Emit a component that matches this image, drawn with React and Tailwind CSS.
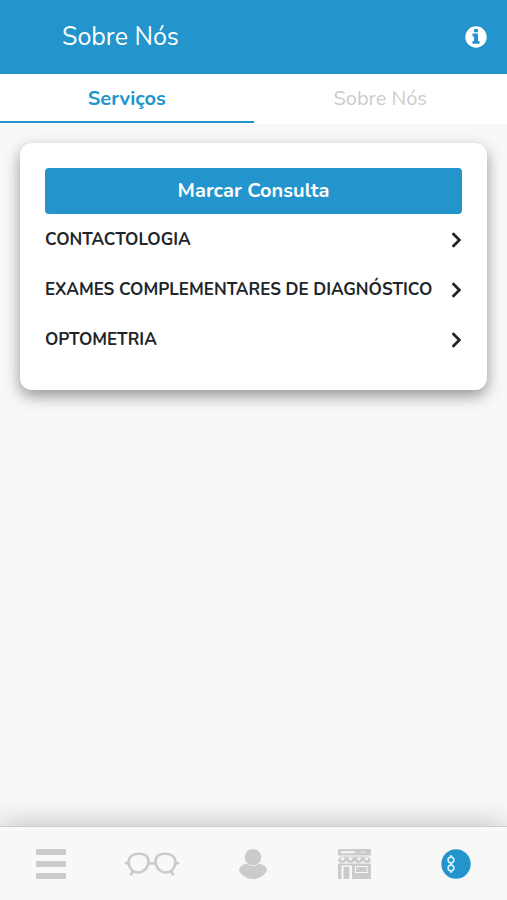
import React, { useState } from "react";
import { FaChevronRight } from "react-icons/fa";

const TABS = ["Serviços", "Sobre Nós"];

const SERVICES = [
  "CONTACTOLOGIA",
  "EXAMES COMPLEMENTARES DE DIAGNÓSTICO",
  "OPTOMETRIA",
];

const InfoIcon = () => (
  <svg width="22" height="22" viewBox="0 0 22 22">
    <circle cx="11" cy="11" r="10.700" fill="#ffffff" />
    <rect x="9" y="3" width="4" height="3.300" rx="0.500" fill="#2394cc" />
    <path
      fill="#2394cc"
      d="M7.500 7.600H13V15H14.500V17.800H7.500V15H9V10.400H7.500Z"
    />
  </svg>
);

const MenuIcon = () => (
  <svg width="30" height="30" viewBox="0 0 30 30" fill="currentColor">
    <rect y="0" width="30" height="6" rx="1" />
    <rect y="12" width="30" height="6" rx="1" />
    <rect y="24" width="30" height="6" rx="1" />
  </svg>
);

const GlassesIcon = () => (
  <svg
    width="56"
    height="24"
    viewBox="0 0 56 24"
    fill="none"
    stroke="currentColor"
    strokeWidth="2.6"
    strokeLinecap="round"
    strokeLinejoin="round"
  >
    <path d="M14 1.800C19 1.300 24.500 3.500 24.500 9C24.500 15 20 20.500 14 20.500C8.500 20.500 5 16 4.700 10C4.500 4.500 9 2.100 14 1.800Z" />
    <path d="M42 1.800C37 1.300 31.500 3.500 31.500 9C31.500 15 36 20.500 42 20.500C47.500 20.500 51 16 51.300 10C51.500 4.500 47 2.100 42 1.800Z" />
    <path d="M24.500 11.500H31.500M9 19.500L7 22.300M47 19.500L49 22.300" />
    <path
      fill="currentColor"
      stroke="none"
      d="M0 11L5 8.500V14ZM56 11L51 8.500V14Z"
    />
  </svg>
);

const PersonIcon = () => (
  <svg width="28" height="30" viewBox="0 0 28 30" fill="currentColor">
    <path d="M5.500 15.300C8 14.500 20 14.500 22.500 15.300C25.500 16.300 27.800 18.500 28 21.500C25 27 20 30 14 30C8 30 3 27 0 21.500C.2 18.500 2.500 16.300 5.500 15.300Z" />
    <circle
      cx="14"
      cy="8.200"
      r="8.600"
      stroke="#f8f8f8"
      strokeWidth="0.800"
    />
  </svg>
);

const StoreIcon = () => (
  <svg width="33" height="30" viewBox="0 0 33 30">
    <g fill="currentColor">
      <rect width="33" height="6.500" rx="0.500" />
      <path d="M2 7.500H31L33 11C32.800 13 31 14 29 14C27 14 26 13 25 12C24 13 22.700 14 20.700 14C18.700 14 17.500 13 16.500 12C15.500 13 14.300 14 12.300 14C10.300 14 9 13 8 12C7 13 6 14 4 14C2 14 .2 13 0 11Z" />
      <path d="M0 14.500H33V30H14V16.500H3.500V30H0Z" />
      <rect x="5.500" y="18" width="6" height="12" />
    </g>
    <g fill="none" stroke="#f8f8f8" strokeWidth="1.200">
      <path d="M3 3.200H17" strokeWidth="2" />
      <path d="M23 3.200H27" strokeWidth="0.800" />
      <rect x="17.500" y="17.500" width="11.500" height="6" strokeWidth="1" />
    </g>
    <path
      fill="#f8f8f8"
      d="M2 8.500H7L4.500 12ZM10 8.500H15L12.300 12ZM18.500 8.500H23.500L20.800 12ZM26.500 8.500H31L28.700 12Z"
    />
  </svg>
);

const BrandIcon = () => (
  <svg width="30" height="30" viewBox="0 0 30 30">
    <circle cx="15" cy="15" r="14.700" fill="#2394cc" />
    <g fill="none" stroke="#d9f0fb" strokeWidth="1.600">
      <circle cx="10" cy="11" r="2.900" />
      <circle cx="10" cy="19" r="2.900" />
      <path d="M10 6V8M10 14V16M10 22V24" />
    </g>
  </svg>
);

const NAV_ITEMS = [
  { label: "Menu", Icon: MenuIcon },
  { label: "Óculos", Icon: GlassesIcon },
  { label: "Perfil", Icon: PersonIcon },
  { label: "Lojas", Icon: StoreIcon },
  { label: "Sobre Nós", Icon: BrandIcon },
];

const App = () => {
  const [activeTab, setActiveTab] = useState(TABS[0]);

  return (
    <div className="flex min-h-screen flex-col bg-[#f8f8f8] font-['Nunito','Lato',sans-serif] text-[#212529]">
      {/* Header */}
      <header className="flex h-[74px] items-center justify-between bg-[#2394cc] pr-5 pl-[62px] text-white">
        <h1 className="text-[25px] leading-8">Sobre Nós</h1>
        <button aria-label="Informações">
          <InfoIcon />
        </button>
      </header>

      {/* Tabs */}
      <div role="tablist" className="flex h-[50px] bg-white pb-px">
        {TABS.map((tab) => (
          <button
            key={tab}
            role="tab"
            aria-selected={tab === activeTab}
            onClick={() => setActiveTab(tab)}
            className={`flex-1 border-b-2 pt-[2px] text-xl leading-6 ${
              tab === activeTab
                ? "border-[#2394cc] font-bold text-[#2394cc]"
                : "border-transparent text-[#cccccc]"
            }`}
          >
            {tab}
          </button>
        ))}
      </div>

      {/* Services */}
      <main className="flex-1 px-5 py-[19px]">
        <section className="rounded-xl bg-white p-[25px] shadow-[0_6px_15px_rgba(0,0,0,0.4)]">
          <button className="h-[46px] w-full rounded bg-[#2394cc] text-xl leading-6 font-bold text-white">
            Marcar Consulta
          </button>
          <ul className="pt-px">
            {SERVICES.map((service) => (
              <li key={service}>
                <button className="flex h-[50px] w-full items-center justify-between text-left text-[17px] leading-6 font-bold whitespace-nowrap">
                  {service}
                  <FaChevronRight className="h-[18px] w-[11px] shrink-0" />
                </button>
              </li>
            ))}
          </ul>
        </section>
      </main>

      {/* Bottom navigation */}
      <nav className="sticky bottom-0 grid h-[74px] grid-cols-5 border-t border-[#cccccc] bg-[#f8f8f8] text-[#cbcbcb] shadow-[0_0_30px_rgba(0,0,0,0.25)]">
        {NAV_ITEMS.map(({ label, Icon }) => (
          <button
            key={label}
            aria-label={label}
            className="flex items-center justify-center"
          >
            <Icon />
          </button>
        ))}
      </nav>
    </div>
  );
};

export default App;
